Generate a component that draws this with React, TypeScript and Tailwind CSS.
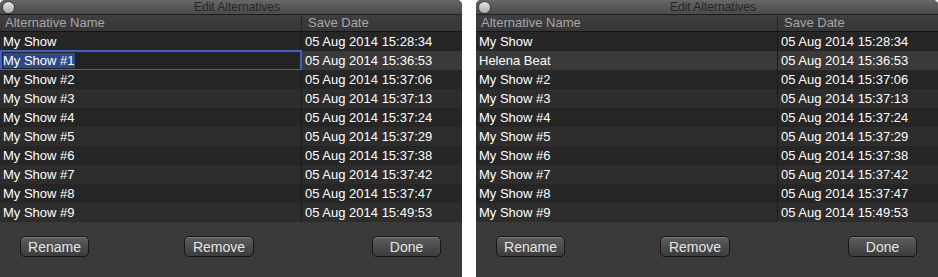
const rows = [
  ['My Show', '05 Aug 2014 15:28:34'],
  ['My Show #1', '05 Aug 2014 15:36:53'],
  ['My Show #2', '05 Aug 2014 15:37:06'],
  ['My Show #3', '05 Aug 2014 15:37:13'],
  ['My Show #4', '05 Aug 2014 15:37:24'],
  ['My Show #5', '05 Aug 2014 15:37:29'],
  ['My Show #6', '05 Aug 2014 15:37:38'],
  ['My Show #7', '05 Aug 2014 15:37:42'],
  ['My Show #8', '05 Aug 2014 15:37:47'],
  ['My Show #9', '05 Aug 2014 15:49:53'],
]

function Button({ label, className }: { label: string; className?: string }) {
  return (
    <button
      className={`h-[21px] rounded-[5px] border border-[#161616] bg-gradient-to-b from-[#5e5e5e] to-[#3c3c3c] text-[14px] leading-none text-[#e4e4e4] shadow-[inset_0_1px_0_rgba(255,255,255,0.18)] ${className ?? ''}`}
    >
      {label}
    </button>
  )
}

function Panel({ editing, secondName }: { editing: boolean; secondName: string }) {
  return (
    <div className="flex w-[462px] flex-col overflow-hidden rounded-t-[5px] bg-[#3a3a3a] font-['Liberation_Sans',Arial,sans-serif]">
      {/* title bar */}
      <div className="relative flex h-[15px] items-center justify-center border-b border-[#1e1e1e] bg-gradient-to-b from-[#676767] to-[#4a4a4a] pl-[12px]">
        <div className="absolute left-[3px] top-[2px] h-[11px] w-[11px] rounded-full bg-gradient-to-b from-[#e8e8e8] to-[#a8a8a8] shadow-[0_0_0_1px_rgba(0,0,0,0.35)]" />
        <span className="text-[12px] leading-none text-[#262626]">Edit Alternatives</span>
      </div>

      {/* header */}
      <div className="flex h-[17px] border-b border-[#141414] bg-gradient-to-b from-[#3f3f3f] to-[#363636] text-[13px] leading-[16px] text-[#a6a6a6]">
        <div className="w-[302px] border-r border-[#252525] pl-[5px]">Alternative Name</div>
        <div className="flex-1 pl-[6px]">Save Date</div>
      </div>

      {/* rows */}
      <div className="flex flex-col">
        {rows.map(([name, date], i) => {
          const isSecond = i === 1
          const label = isSecond ? secondName : name
          const bg = isSecond ? 'bg-[#3a3a3a]' : i % 2 === 0 ? 'bg-[#262626]' : 'bg-[#2d2d2d]'
          return (
            <div key={i} className={`flex h-[19px] text-[13px] leading-[19px] text-white ${bg}`}>
              {isSecond && editing ? (
                <div className="-my-[1px] flex h-[21px] w-[302px] items-center border-2 border-[#3d5fd0] bg-[#232323] pl-[1px]">
                  <span className="bg-[#2e4a86] leading-[15px]">{label}</span>
                </div>
              ) : (
                <div className="w-[302px] border-r border-[#1c1c1c] pl-[3px]">{label}</div>
              )}
              <div className="flex-1 pl-[3px]">{date}</div>
            </div>
          )
        })}
      </div>

      {/* footer */}
      <div className="flex flex-1 items-start pl-[20px] pt-[14px]">
        <Button label="Rename" className="w-[69px]" />
        <Button label="Remove" className="ml-[95px] w-[70px]" />
        <Button label="Done" className="ml-[118px] w-[69px]" />
      </div>
    </div>
  )
}

export default function App() {
  return (
    <div className="flex h-[277px] w-[938px] justify-between bg-white">
      <Panel editing secondName="My Show #1" />
      <Panel editing={false} secondName="Helena Beat" />
    </div>
  )
}
